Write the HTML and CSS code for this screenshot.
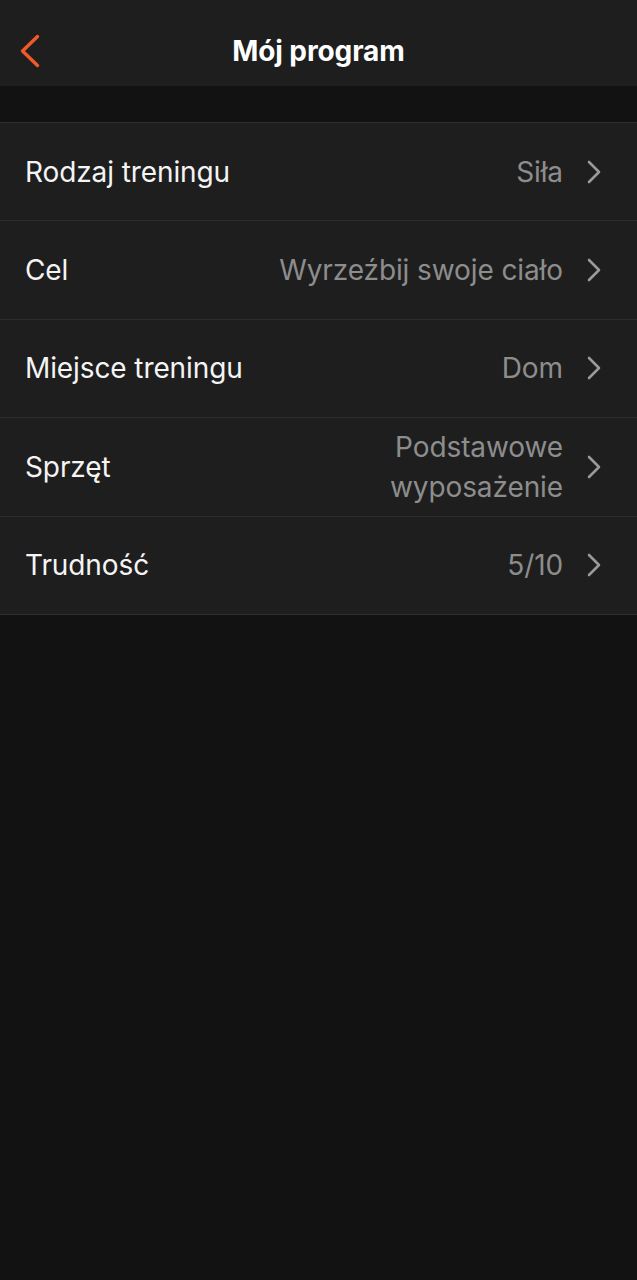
FILE: index.html
```html
<!DOCTYPE html>
<html lang="pl">
<head>
    <meta charset="UTF-8">
    <meta name="viewport" content="width=device-width, initial-scale=1.0">
    <title>Mój program</title>
    <link rel="stylesheet" href="styles.css">
</head>
<body>
    <!-- Nagłówek -->
    <header class="topbar">
        <button class="back" aria-label="Wstecz">
            <svg width="22" height="34" viewBox="0 0 22 34"><path d="M18.5 2.5 L3.5 17 L18.5 31.5" fill="none" stroke="#f05a28" stroke-width="3.4" stroke-linecap="round" stroke-linejoin="round"/></svg>
        </button>
        <h1>Mój program</h1>
    </header>

    <div class="spacer"></div>

    <!-- Ustawienia -->
    <ul class="settings">
        <li class="row">
            <span class="label">Rodzaj treningu</span>
            <span class="value">Siła</span>
            <svg class="chev" width="16" height="26" viewBox="0 0 16 26"><path d="M3 3 L13 13 L3 23" fill="none" stroke="#9a9a9a" stroke-width="2.6" stroke-linecap="round" stroke-linejoin="round"/></svg>
        </li>
        <li class="row">
            <span class="label">Cel</span>
            <span class="value">Wyrzeźbij swoje ciało</span>
            <svg class="chev" width="16" height="26" viewBox="0 0 16 26"><path d="M3 3 L13 13 L3 23" fill="none" stroke="#9a9a9a" stroke-width="2.6" stroke-linecap="round" stroke-linejoin="round"/></svg>
        </li>
        <li class="row">
            <span class="label">Miejsce treningu</span>
            <span class="value">Dom</span>
            <svg class="chev" width="16" height="26" viewBox="0 0 16 26"><path d="M3 3 L13 13 L3 23" fill="none" stroke="#9a9a9a" stroke-width="2.6" stroke-linecap="round" stroke-linejoin="round"/></svg>
        </li>
        <li class="row">
            <span class="label">Sprzęt</span>
            <span class="value">Podstawowe<br>wyposażenie</span>
            <svg class="chev" width="16" height="26" viewBox="0 0 16 26"><path d="M3 3 L13 13 L3 23" fill="none" stroke="#9a9a9a" stroke-width="2.6" stroke-linecap="round" stroke-linejoin="round"/></svg>
        </li>
        <li class="row">
            <span class="label">Trudność</span>
            <span class="value">5/10</span>
            <svg class="chev" width="16" height="26" viewBox="0 0 16 26"><path d="M3 3 L13 13 L3 23" fill="none" stroke="#9a9a9a" stroke-width="2.6" stroke-linecap="round" stroke-linejoin="round"/></svg>
        </li>
    </ul>
</body>
</html>
```

FILE: styles.css
```css
body {
    font-family: Inter, "Noto Sans", sans-serif;
    margin: 0;
    padding: 0;
    background-color: #121212;
    color: #f2f2f2;
}
.topbar {
    height: 86px;
    box-sizing: border-box;
    padding-top: 15px;
    background-color: #1e1e1e;
    display: flex;
    align-items: center;
    justify-content: center;
    position: relative;
}
.topbar h1 {
    margin: 0;
    font-size: 28px;
    font-weight: 700;
    color: #ffffff;
    letter-spacing: -0.1px;
}
.back {
    position: absolute;
    left: 19px;
    top: 34px;
    padding: 0;
    border: none;
    background: none;
    display: flex;
}
.spacer {
    height: 36px;
}
.settings {
    list-style: none;
    margin: 0;
    padding: 0;
    border-top: 1px solid #2e2e2e;
}
.row {
    height: 98.4px;
    box-sizing: border-box;
    background-color: #1e1e1e;
    border-bottom: 1px solid #2e2e2e;
    display: flex;
    align-items: center;
    padding: 0 35px 0 25px;
}
.label {
    flex: 1;
    font-size: 28px;
    letter-spacing: -0.1px;
    color: #f4f4f4;
}
.value {
    font-size: 28px;
    letter-spacing: -0.1px;
    color: #8d8d8d;
    text-align: right;
    line-height: 40px;
    margin-right: 23px;
}
.chev {
    display: block;
}
```
